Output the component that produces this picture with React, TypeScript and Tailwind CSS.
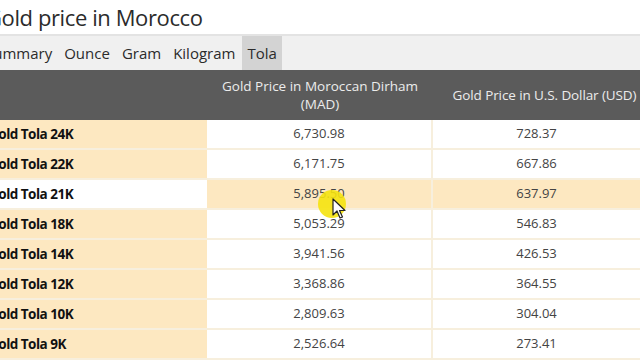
const tabs = ['Summary', 'Ounce', 'Gram', 'Kilogram', 'Tola'];

const rows = [
  { label: 'Gold Tola 24K', mad: '6,730.98', usd: '728.37' },
  { label: 'Gold Tola 22K', mad: '6,171.75', usd: '667.86' },
  { label: 'Gold Tola 21K', mad: '5,895.50', usd: '637.97', hover: true },
  { label: 'Gold Tola 18K', mad: '5,053.29', usd: '546.83' },
  { label: 'Gold Tola 14K', mad: '3,941.56', usd: '426.53' },
  { label: 'Gold Tola 12K', mad: '3,368.86', usd: '364.55' },
  { label: 'Gold Tola 10K', mad: '2,809.63', usd: '304.04' },
  { label: 'Gold Tola 9K', mad: '2,526.64', usd: '273.41' },
];

function Cursor() {
  return (
    <div className="absolute left-[318px] top-[190px] pointer-events-none">
      <div className="w-[28px] h-[28px] rounded-full bg-[#f5e30f]/90" />
      <svg className="absolute left-[14px] top-[8px]" width="14" height="22" viewBox="0 0 14 22">
        <path d="M1 1 L1 17 L5 13 L8 20 L10.5 19 L7.5 12.5 L13 12.5 Z" fill="#fff" stroke="#222" strokeWidth="1.2" strokeLinejoin="round" />
      </svg>
    </div>
  );
}

export default function App() {
  return (
    <div className="relative w-[640px] h-[360px] overflow-hidden bg-white font-['Open_Sans',sans-serif]">
      <div className="ml-[-16px]">
        <h1 className="h-[36px] pt-[2px] text-[22px] leading-[30px] tracking-[-0.4px] text-[#2b2b2b] pl-[2px] border-b-2 border-[#e3e3e3]">
          Gold price in Morocco
        </h1>
      </div>
      <div className="ml-[-20px] flex h-[34px] items-stretch bg-[#f0f0f0] gap-[2px]">
        {tabs.map((t) => (
          <div
            key={t}
            className={`px-[5px] flex items-center text-[15px] text-[#2b2b2b] ${t === 'Tola' ? 'bg-[#d3d3d3]' : ''}`}
          >
            {t}
          </div>
        ))}
      </div>

      <div className="ml-[-12px]">
        <div className="grid grid-cols-[219px_226px_1fr] h-[50px] bg-[#5b5b5b] text-[#ececec] text-[13.5px] leading-[18px]">
          <div />
          <div className="flex items-center justify-center text-center">
            Gold Price in Moroccan Dirham
            <br />
            (MAD)
          </div>
          <div className="flex items-center justify-center text-center pl-[16px] tracking-[-0.1px]">
            Gold Price in U.S. Dollar (USD)
          </div>
        </div>
        {rows.map((r) => (
          <div key={r.label} className="grid grid-cols-[219px_226px_1fr] h-[30px] border-b-2 border-[#f7efdd]">
            <div
              className={`flex items-center pl-[1px] text-[13.5px] tracking-[-0.5px] font-bold text-[#111] ${r.hover ? 'bg-white' : 'bg-[#fde8c1]'}`}
            >
              {r.label}
            </div>
            <div
              className={`flex items-center justify-center text-[13px] text-[#444] border-r-2 border-[#f7efdd] ${r.hover ? 'bg-[#fde8c1]' : 'bg-white'}`}
            >
              {r.mad}
            </div>
            <div
              className={`flex items-center justify-center text-[13px] text-[#444] ${r.hover ? 'bg-[#fde8c1]' : 'bg-white'}`}
            >
              {r.usd}
            </div>
          </div>
        ))}
      </div>
      <Cursor />
    </div>
  );
}
